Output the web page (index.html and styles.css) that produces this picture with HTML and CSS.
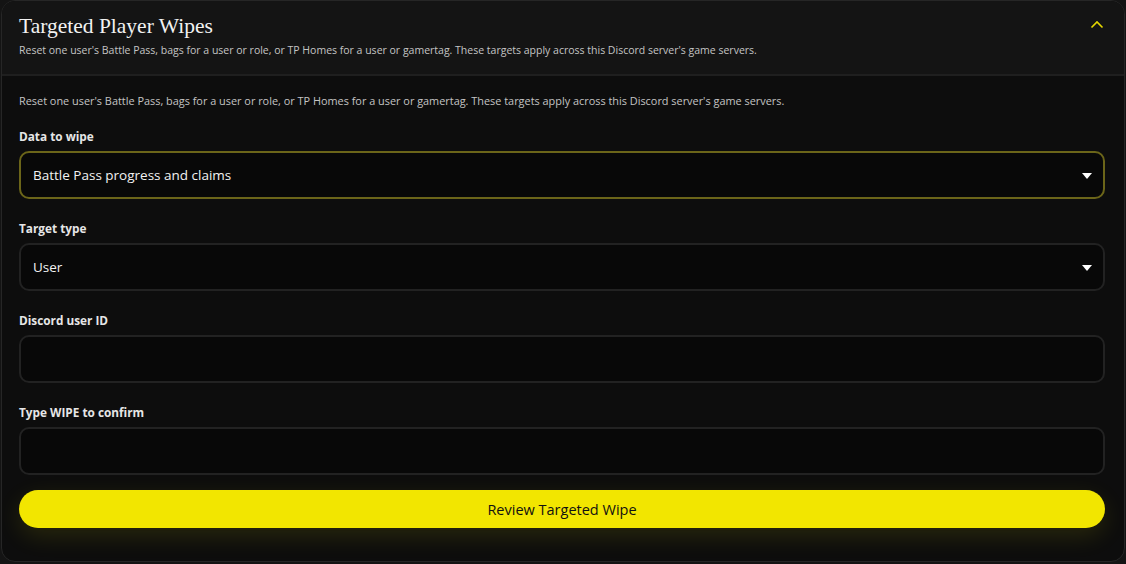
FILE: index.html
```html
<!DOCTYPE html>
<html lang="en">
<head>
<meta charset="utf-8">
<title>Targeted Player Wipes</title>
<link rel="stylesheet" href="styles.css">
</head>
<body>
<section class="card">
  <header class="card-head">
    <div class="head-text">
      <h2 class="title">Targeted Player Wipes</h2>
      <p class="subtitle">Reset one user's Battle Pass, bags for a user or role, or TP Homes for a user or gamertag. These targets apply across this Discord server's game servers.</p>
    </div>
    <svg class="chevron" width="14" height="9" viewBox="0 0 14 9"><path d="M1.5 7.5 L7 2 L12.5 7.5" fill="none" stroke="#e6d800" stroke-width="1.6"/></svg>
  </header>
  <div class="card-body">
    <p class="intro">Reset one user's Battle Pass, bags for a user or role, or TP Homes for a user or gamertag. These targets apply across this Discord server's game servers.</p>
    <div class="field">
      <label class="label">Data to wipe</label>
      <div class="control select focused">
        <span>Battle Pass progress and claims</span>
        <svg class="caret" width="10" height="6" viewBox="0 0 10 6"><path d="M0 0 H10 L5 6 Z" fill="#fff"/></svg>
      </div>
    </div>
    <div class="field">
      <label class="label">Target type</label>
      <div class="control select">
        <span>User</span>
        <svg class="caret" width="10" height="6" viewBox="0 0 10 6"><path d="M0 0 H10 L5 6 Z" fill="#fff"/></svg>
      </div>
    </div>
    <div class="field">
      <label class="label">Discord user ID</label>
      <div class="control"></div>
    </div>
    <div class="field">
      <label class="label">Type WIPE to confirm</label>
      <div class="control"></div>
    </div>
    <button class="btn">Review Targeted Wipe</button>
  </div>
</section>
</body>
</html>
```
FILE: styles.css
```css
html, body {
  margin: 0;
  padding: 0;
  background: #141414;
}
body {
  padding: 0 1px 2px 1px;
  font-family: "Open Sans", "Noto Sans", sans-serif;
  color: #eee;
}
.card {
  border: 1px solid #262626;
  border-radius: 14px;
  background: #0d0d0d;
  overflow: hidden;
  height: 562px;
  box-sizing: border-box;
}
.card-head {
  display: flex;
  justify-content: space-between;
  align-items: flex-start;
  background: #141414;
  border-bottom: 2px solid #1f1f1f;
  padding: 11px 20px 0 17px;
  height: 75px;
  box-sizing: border-box;
}
.title {
  margin: 0;
  font-family: "Liberation Serif", serif;
  font-weight: normal;
  font-size: 21.5px;
  line-height: 28px;
  color: #f2f2f2;
}
.subtitle {
  margin: 3px 0 0;
  font-size: 10.5px;
  line-height: 14px;
  color: #c4c4c4;
}
.chevron {
  margin-top: 8px;
}
.card-body {
  padding: 18px 19px 0 17px;
}
.intro {
  margin: 0 0 20px;
  font-size: 10.9px;
  line-height: 14px;
  color: #c4c4c4;
}
.field {
  margin-bottom: 21px;
}
.field:last-of-type {
  margin-bottom: 0;
}
.label {
  display: block;
  font-size: 11.8px;
  font-weight: bold;
  color: #e6e6e6;
  line-height: 16px;
  margin-bottom: 7px;
}
.control {
  height: 48px;
  box-sizing: border-box;
  border: 2px solid #222;
  border-radius: 10px;
  background: #080808;
  display: flex;
  align-items: center;
  justify-content: space-between;
  padding: 0 11px 0 12px;
  font-size: 13.5px;
  color: #f2f2f2;
}
.control.focused {
  border-color: #6b6519;
}
.caret {
  margin-top: 1px;
}
.btn {
  display: block;
  width: 100%;
  height: 38px;
  margin-top: 15px;
  border: none;
  border-radius: 19px;
  background: #f2e600;
  color: #111;
  font-family: "Open Sans", "Noto Sans", sans-serif;
  font-size: 14.5px;
  box-shadow: 0 8px 24px rgba(242, 230, 0, 0.12);
}
```
